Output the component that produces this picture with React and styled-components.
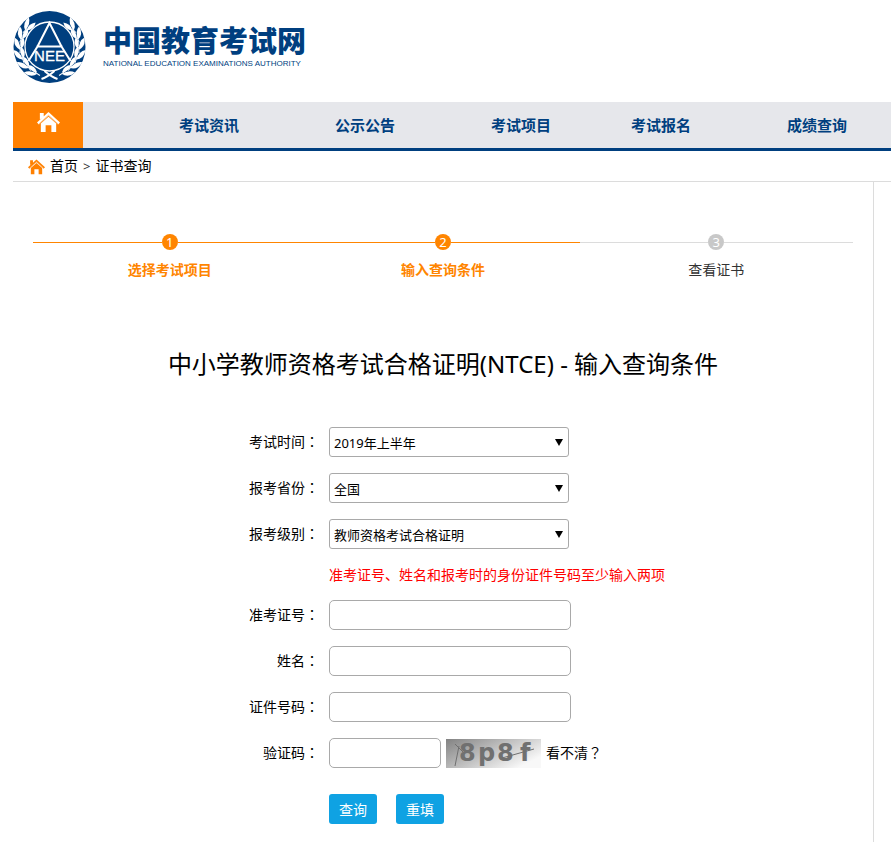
import React from "react";
import styled, { createGlobalStyle } from "styled-components";

const navLinks = [
  { text: "考试资讯" },
  { text: "公示公告" },
  { text: "考试项目" },
  { text: "考试报名", tight: true },
  { text: "成绩查询" },
];

const steps = [
  { text: "选择考试项目", state: "done" },
  { text: "输入查询条件", state: "done" },
  { text: "查看证书", state: "todo" },
];

const selects = [
  { id: "time", label: "考试时间", options: ["2019年上半年"] },
  { id: "province", label: "报考省份", options: ["全国"] },
  { id: "level", label: "报考级别", options: ["教师资格考试合格证明"] },
];

const inputs = [
  { id: "ticket", label: "准考证号" },
  { id: "name", label: "姓名" },
  { id: "idcard", label: "证件号码" },
];

const GlobalStyle = createGlobalStyle`
  * {
    box-sizing: border-box;
  }

  body {
    margin: 0;
    background: #fff;
    color: #000;
    font-family: "Noto Sans", "Noto Sans CJK SC", sans-serif;
    font-size: 14px;
    line-height: 20px;
    overflow-x: hidden;
  }

  button, input, select {
    font-family: inherit;
  }
`;

const Page = styled.div`
  padding-left: 13px;
`;

const Header = styled.header`
  display: flex;
  align-items: center;
  gap: 17px;
  height: 102px;
  padding-bottom: 8px;
  color: #003f7f;
`;

const Brand = styled.div`
  display: flex;
  flex-direction: column;
  white-space: nowrap;

  strong {
    font-size: 29px;
    font-weight: 900;
    line-height: 34px;
  }

  span {
    font-family: "Liberation Sans", sans-serif;
    font-size: 8px;
    line-height: 12px;
  }
`;

const Nav = styled.nav`
  display: flex;
  height: 49px;
  background: #e6e7eb;
  border-bottom: 3px solid #003f7f;
  overflow: hidden;
`;

const HomeLink = styled.a`
  display: flex;
  flex: 0 0 70px;
  justify-content: center;
  padding-top: 8px;
  background: #ff8000;
`;

const NavLinks = styled.div`
  display: flex;
  padding-left: 48px;
`;

const NavLink = styled.a`
  flex: none;
  padding: 0 48px;
  margin-left: ${({ $tight }) => ($tight ? "-16px" : "0")};
  color: #003f7f;
  font-size: 15px;
  font-weight: 700;
  line-height: 46px;
  text-decoration: none;
`;

const Crumbs = styled.div`
  display: flex;
  align-items: center;
  gap: 5px;
  height: 31px;
  padding-left: 15px;
  border-bottom: 1px solid #dcdcdc;

  a {
    display: flex;
    align-items: center;
    gap: 5px;
    color: #000;
    text-decoration: none;
  }

  i {
    color: #333;
    font-size: 13px;
    font-style: normal;
  }
`;

const Main = styled.main`
  margin-right: 17px;
  padding: 52px 20px 18px;
  border-right: 1px solid #dcdcdc;
`;

const Steps = styled.ol`
  display: flex;
  margin: 0;
  padding: 0;
  list-style: none;
`;

const Step = styled.li`
  flex: 1;
  display: flex;
  flex-direction: column;
  align-items: center;
  gap: 10px;
  color: ${({ $state }) => ($state === "done" ? "#ff8500" : "#333")};
  font-weight: ${({ $state }) => ($state === "done" ? 700 : 400)};
`;

const StepLine = styled.div`
  display: flex;
  align-items: center;
  align-self: stretch;

  &::before,
  &::after {
    content: "";
    flex: 1;
    height: 1px;
    background: ${({ $state }) => ($state === "done" ? "#ff8500" : "#dcdcdc")};
  }

  span {
    width: 16px;
    height: 16px;
    border-radius: 50%;
    background: ${({ $state }) => ($state === "done" ? "#ff8500" : "#c8c8c8")};
    color: #fff;
    font-size: 13px;
    font-weight: 400;
    line-height: 16px;
    text-align: center;
  }
`;

const Title = styled.h1`
  margin: 66px 0 45px;
  font-size: 24px;
  font-weight: 400;
  line-height: 36px;
  text-align: center;
`;

const Form = styled.form`
  display: flex;
  flex-direction: column;
  gap: 16px;
`;

const Row = styled.div`
  display: grid;
  grid-template-columns: 286px 1fr;
  column-gap: 10px;
  align-items: center;
  min-height: 30px;
`;

const Label = styled.label`
  padding-bottom: 2px;
  text-align: right;

  &::after {
    content: "：";
    font-family: "Noto Sans CJK TC", sans-serif;
  }
`;

const SelectBox = styled.div`
  position: relative;
  width: 240px;
  height: 30px;

  &::after {
    content: "";
    position: absolute;
    top: 12px;
    right: 6px;
    border: 4px solid transparent;
    border-top: 7px solid #000;
    border-bottom: 0;
    pointer-events: none;
  }
`;

const Select = styled.select`
  appearance: none;
  width: 100%;
  height: 100%;
  padding: 2px 20px 0 4px;
  border: 1px solid #a9a9a9;
  border-radius: 3px;
  background: #fff;
  color: #000;
  font-size: 13px;
`;

const Input = styled.input`
  width: ${({ $short }) => ($short ? "112px" : "242px")};
  height: 30px;
  padding: 0 6px;
  border: 1px solid #a9a9a9;
  border-radius: 5px;
  font-size: 13px;
`;

const Notice = styled.p`
  grid-column: 2;
  margin: 0;
  color: #f00;
`;

const NoticeRow = styled(Row)`
  min-height: 20px;
  margin-bottom: -1px;
`;

const CodeField = styled.div`
  display: flex;
  align-items: center;
  gap: 5px;
`;

const Refresh = styled.a`
  padding-bottom: 2px;
  color: #000;
  text-decoration: none;

  span {
    font-family: "Noto Sans CJK TC", sans-serif;
  }
`;

const Actions = styled.div`
  grid-column: 2;
  display: flex;
  gap: 19px;
  margin-top: 10px;
`;

const Button = styled.button`
  width: 48px;
  height: 30px;
  padding: 0;
  border: 0;
  border-radius: 3px;
  background: #0fa2e3;
  color: #fff;
  font-size: 14px;
`;

// degrees, from the top of the wreath down to its tie
const leaves = [-46, -66, -86, -106, -126, -146];

const Laurel = () => (
  <g>
    {leaves.map((deg) => (
      <g key={deg} transform={`rotate(${deg} 36 36)`} fill="#fff">
        <path d="M31 7 Q34 -0.500 43 0.500 Q40 6.500 31 7Z" />
        <path d="M32 8 Q38 4.500 44 9 Q38 13 32 8Z" />
        <path d="M28 7 L34 7" stroke="#fff" strokeWidth="1" />
      </g>
    ))}
  </g>
);

const Emblem = () => (
  <svg width="73" height="72" viewBox="0 0 72 72" aria-hidden="true">
    <circle cx="36" cy="36" r="36" fill="#003f7f" />
    <Laurel />
    <g transform="translate(72 0) scale(-1 1)">
      <Laurel />
    </g>
    <circle cx="36" cy="35.500" r="24.500" fill="#003f7f" stroke="#fff" strokeWidth="1.300" />
    <path d="M23 35.500 H49 M24 35.500 L36 12 L48 35.500 M24 35.500 L15 50 M48 35.500 L57 50" fill="none" stroke="#fff" strokeWidth="2" />
    <path d="M28 68 Q34 66 41 60 M44 68 Q38 66 31 60" fill="none" stroke="#fff" strokeWidth="2" />
    <text
      x="36"
      y="50"
      fill="#fff"
      stroke="#fff"
      strokeWidth="0.300"
      fontFamily="Liberation Sans, sans-serif"
      fontSize="15"
      textAnchor="middle"
    >
      NEE
    </text>
  </svg>
);

const House = ({ size, color, line }) => (
  <svg width={size} height={size} viewBox="0 0 24 24" aria-hidden="true">
    <path d="M3 3 H7 V7 L3 10Z M12 2 L24 13 L22 15 L12 6 L2 15 L0 13Z" fill={color} />
    <path d="M4 14 L12 7 L20 14 V23 H15 V16 H9 V23 H4Z" fill={color} />
    <path d="M2 14.500 L12 5.500 L22 14.500" fill="none" stroke={line} strokeWidth="0.500" />
  </svg>
);

const Captcha = () => (
  <svg width="95" height="29" viewBox="0 0 95 29" role="img" aria-label="验证码">
    <defs>
      <linearGradient id="shade" x1="0" y1="0" x2="1" y2="0.600">
        <stop offset="0" stopColor="#828282" />
        <stop offset="1" stopColor="#f8f8f8" />
      </linearGradient>
    </defs>
    <rect width="95" height="29" fill="url(#shade)" />
    <text
      x="13 32 51 74"
      y="22"
      fill="#707070"
      fontFamily="DejaVu Sans, sans-serif"
      fontSize="24"
      fontWeight="700"
    >
      8p8f
    </text>
    <path d="M9 5 L17 13 M13 7 L9 27 M56 19 L88 10" fill="none" stroke="#707070" strokeWidth="1" />
  </svg>
);

const App = () => {
  return (
    <>
      <GlobalStyle />
      <Page>
        <Header>
          <Emblem />
          <Brand>
            <strong>中国教育考试网</strong>
            <span>NATIONAL EDUCATION EXAMINATIONS AUTHORITY</span>
          </Brand>
        </Header>

        <Nav>
          <HomeLink href="#" aria-label="首页">
            <House size={23} color="#fff" line="#ff8000" />
          </HomeLink>
          <NavLinks>
            {navLinks.map(({ text, tight }) => (
              <NavLink href="#" key={text} $tight={tight}>
                {text}
              </NavLink>
            ))}
          </NavLinks>
        </Nav>

        <Crumbs>
          <a href="#">
            <House size={17} color="#ff8000" line="#fff" />
            首页
          </a>
          <i>&gt;</i>
          <span>证书查询</span>
        </Crumbs>

        <Main>
          <Steps>
            {steps.map(({ text, state }, index) => (
              <Step key={text} $state={state}>
                <StepLine $state={state}>
                  <span>{index + 1}</span>
                </StepLine>
                {text}
              </Step>
            ))}
          </Steps>

          <Title>中小学教师资格考试合格证明(NTCE) - 输入查询条件</Title>

          <Form onSubmit={(e) => e.preventDefault()}>
            {selects.map(({ id, label, options }) => (
              <Row key={id}>
                <Label htmlFor={id}>{label}</Label>
                <SelectBox>
                  <Select id={id}>
                    {options.map((each) => (
                      <option key={each}>{each}</option>
                    ))}
                  </Select>
                </SelectBox>
              </Row>
            ))}

            <NoticeRow>
              <Notice>准考证号、姓名和报考时的身份证件号码至少输入两项</Notice>
            </NoticeRow>

            {inputs.map(({ id, label }) => (
              <Row key={id}>
                <Label htmlFor={id}>{label}</Label>
                <Input id={id} type="text" />
              </Row>
            ))}

            <Row>
              <Label htmlFor="code">验证码</Label>
              <CodeField>
                <Input id="code" type="text" $short />
                <Captcha />
                <Refresh href="#">
                  看不清<span>？</span>
                </Refresh>
              </CodeField>
            </Row>

            <Row>
              <Actions>
                <Button type="submit">查询</Button>
                <Button type="reset">重填</Button>
              </Actions>
            </Row>
          </Form>
        </Main>
      </Page>
    </>
  );
};

export default App;
